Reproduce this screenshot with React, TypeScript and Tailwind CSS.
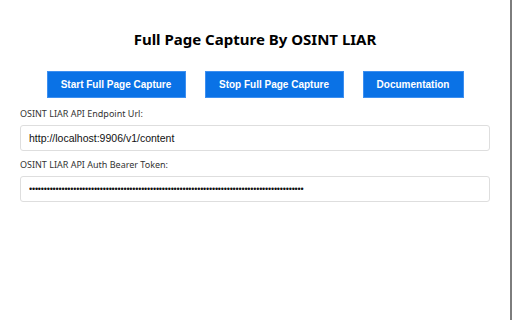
import { useState } from "react";

const token = "•".repeat(93);

function CaptureButton({ label, width }: { label: string; width: string }) {
  return (
    <button
      type="button"
      className={`${width} h-[27px] border border-[#3d8ff0] bg-[#0a72e6] text-center font-['Liberation_Sans',Arial,sans-serif] text-[10px] font-bold text-white`}
    >
      {label}
    </button>
  );
}

export default function App() {
  const [endpoint, setEndpoint] = useState("http://localhost:9906/v1/content");
  const [bearer, setBearer] = useState(token);

  return (
    <div className="flex min-h-[320px] w-full border-r-2 border-[#7d7d7d] bg-white font-['Noto_Sans',sans-serif] text-[#222]">
      <div className="flex-1 px-5 pt-[29px]">
        <h1 className="text-center text-[15px] font-bold leading-5 text-black">
          Full Page Capture By OSINT LIAR
        </h1>

        <div className="mt-[22px] flex justify-center gap-[19px]">
          <CaptureButton label="Start Full Page Capture" width="w-[139px]" />
          <CaptureButton label="Stop Full Page Capture" width="w-[139px]" />
          <CaptureButton label="Documentation" width="w-[101px]" />
        </div>

        <label className="mt-[9px] block text-[9px] leading-[14px] text-[#333]">
          OSINT LIAR API Endpoint Url:
        </label>
        <input
          value={endpoint}
          onChange={(e) => setEndpoint(e.target.value)}
          className="mt-[4px] block h-[26px] w-full rounded-[3px] border border-[#dedede] px-2 font-['Liberation_Sans',Arial,sans-serif] text-[10.5px] text-[#111] outline-none"
        />

        <label className="mt-[7px] block text-[9px] leading-[14px] text-[#333]">
          OSINT LIAR API Auth Bearer Token:
        </label>
        <input
          type="password"
          value={bearer}
          onChange={(e) => setBearer(e.target.value)}
          className="mt-[4px] block h-[26px] w-full rounded-[3px] border border-[#dedede] px-2 font-['Liberation_Sans',sans-serif] text-[9px] tracking-[-0.2px] text-[#111] outline-none"
        />
      </div>
    </div>
  );
}
